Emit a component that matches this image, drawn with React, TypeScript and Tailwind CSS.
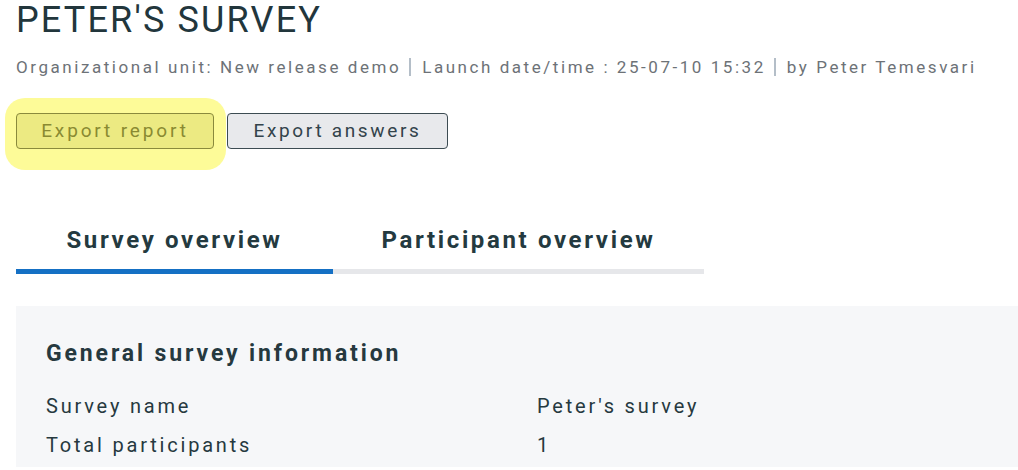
import React, { useState } from "react";

const rows = [
  { label: "Survey name", value: "Peter's survey" },
  { label: "Total participants", value: "1" },
];

const tabs = [
  { id: "survey", label: "Survey overview", width: "w-[317px]" },
  { id: "participant", label: "Participant overview", width: "w-[371px]" },
];

const App: React.FC = () => {
  const [tab, setTab] = useState("survey");

  return (
    <div className="min-h-[470px] overflow-hidden bg-white pl-4 font-['Roboto',sans-serif] text-[#26393f]">
      <h1 className="text-[36px] leading-[40px] tracking-[0.06em] text-[#22363c]">PETER'S SURVEY</h1>

      <div className="mt-[15px] flex h-[24px] items-center whitespace-nowrap text-[17px] leading-[24px] tracking-[0.15em] text-[#6d7277]">
        <span>Organizational unit: New release demo</span>
        <span className="mr-[11px] ml-[8px] h-[18px] w-[2px] bg-[#b4bec8]" />
        <span>Launch date/time : 25-07-10 15:32</span>
        <span className="mr-[11px] ml-[8px] h-[18px] w-[2px] bg-[#b4bec8]" />
        <span>by Peter Temesvari</span>
      </div>

      <div className="mt-[19px] flex items-start">
        <div className="-ml-[11px] rounded-[20px] bg-[#fdfb98] pt-[15px] pb-[21px] pl-[11px] pr-[12px]">
          <button className="h-[36px] w-[198px] rounded-[4px] border border-[#8a8a3c] bg-[#ecea82] text-[19px] tracking-[0.15em] text-[#8a8a32]">
            Export report
          </button>
        </div>
        <button className="mt-[15px] ml-[1px] h-[36px] w-[221px] rounded-[4px] border border-[#3c4b52] bg-[#e8e9ec] text-[19px] tracking-[0.14em] text-[#33434b]">
          Export answers
        </button>
      </div>

      <div className="mt-[56px] flex w-[688px]">
        {tabs.map((t) => (
          <button
            key={t.id}
            onClick={() => setTab(t.id)}
            className={`${t.width} border-b-[5px] pb-[15px] text-[24px] leading-[28px] font-bold tracking-[0.11em] text-[#243a40] ${
              tab === t.id ? "border-[#1570c4]" : "border-[#e6e7ea]"
            }`}
          >
            {t.label}
          </button>
        ))}
      </div>

      <div className="mt-[32px] bg-[#f6f7f9] px-[30px] pt-[34px] pb-[2px]">
        <h2 className="text-[23px] leading-[28px] font-bold tracking-[0.125em]">General survey information</h2>
        <div className="mt-[19px]">
          {rows.map((r) => (
            <div key={r.label} className="flex text-[20px] leading-[39px] tracking-[0.14em]">
              <span className="w-[491px]">{r.label}</span>
              <span>{r.value}</span>
            </div>
          ))}
        </div>
      </div>
    </div>
  );
};

export default App;
